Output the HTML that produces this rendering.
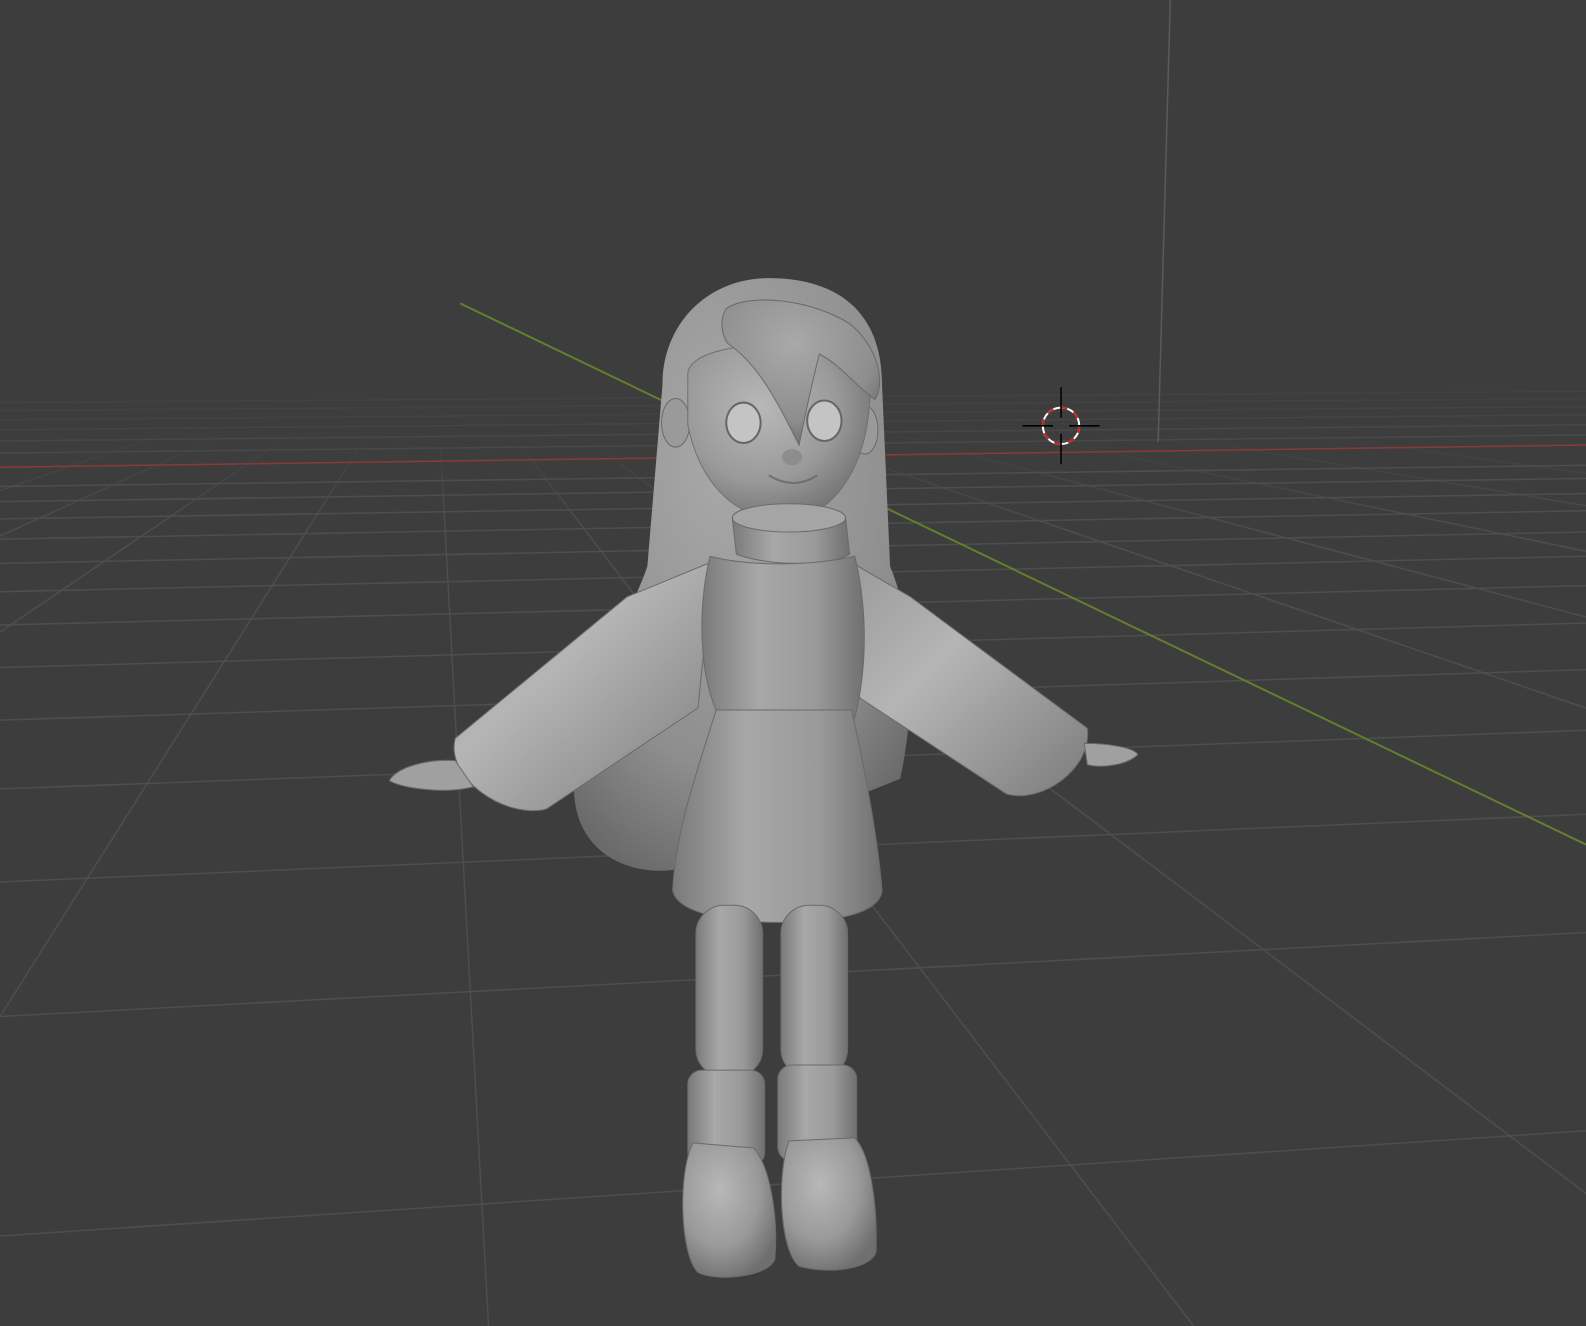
<!DOCTYPE html><html><head><style>html,body{margin:0;padding:0;background:#3d3d3d;overflow:hidden}svg{display:block}</style></head><body>
<svg width="1586" height="1326" viewBox="0 0 1568 1311" preserveAspectRatio="none" xmlns="http://www.w3.org/2000/svg">
<defs>
<radialGradient id="g" cx="40%" cy="35%" r="70%"><stop offset="0" stop-color="#b8b8b8"/><stop offset="0.6" stop-color="#9a9a9a"/><stop offset="1" stop-color="#6f6f6f"/></radialGradient>
<radialGradient id="gh" cx="45%" cy="30%" r="75%"><stop offset="0" stop-color="#a9a9a9"/><stop offset="0.7" stop-color="#8e8e8e"/><stop offset="1" stop-color="#6a6a6a"/></radialGradient>
<linearGradient id="lv" x1="0" x2="1"><stop offset="0" stop-color="#7a7a7a"/><stop offset="0.35" stop-color="#a8a8a8"/><stop offset="0.7" stop-color="#9a9a9a"/><stop offset="1" stop-color="#707070"/></linearGradient>
<linearGradient id="sl" x1="0" y1="0" x2="1" y2="1"><stop offset="0" stop-color="#9a9a9a"/><stop offset="0.4" stop-color="#b5b5b5"/><stop offset="1" stop-color="#7c7c7c"/></linearGradient>
<linearGradient id="fade" x1="0" y1="0" x2="0" y2="1"><stop offset="0" stop-color="#fff" stop-opacity="0"/><stop offset="0.12" stop-color="#fff" stop-opacity="1"/></linearGradient>
<mask id="m"><rect x="0" y="420" width="1568" height="900" fill="url(#fade)"/></mask>
</defs>
<rect width="1568" height="1311" fill="#3d3d3d"/>
<g stroke="#4e4e4e" stroke-width="1.5" fill="none">
<line x1="0" y1="1222" x2="1568" y2="1118"/>
<line x1="0" y1="1005" x2="1568" y2="922"/>
<line x1="0" y1="872" x2="1568" y2="805"/>
<line x1="0" y1="780" x2="1568" y2="722"/>
<line x1="0" y1="712" x2="1568" y2="662"/>
<line x1="0" y1="660" x2="1568" y2="616"/>
<line x1="0" y1="618" x2="1568" y2="579"/>
<line x1="0" y1="585" x2="1568" y2="550"/>
<line x1="0" y1="557" x2="1568" y2="526"/>
<line x1="0" y1="533" x2="1568" y2="505"/>
<line x1="0" y1="513" x2="1568" y2="488"/>
<line x1="0" y1="496" x2="1568" y2="473"/>
<line x1="0" y1="481" x2="1568" y2="460"/>
<line x1="0" y1="448" x2="1568" y2="430" opacity=".7"/>
<line x1="0" y1="436" x2="1568" y2="420" opacity=".6"/>
<line x1="0" y1="425" x2="1568" y2="410" opacity=".5"/>
<line x1="0" y1="415" x2="1568" y2="402" opacity=".4"/>
<line x1="0" y1="406" x2="1568" y2="394" opacity=".35"/>
<line x1="0" y1="398" x2="1568" y2="387" opacity=".3"/>
</g>
<g stroke="#4e4e4e" stroke-width="1.5" fill="none" mask="url(#m)">
<line x1="420" y1="340" x2="0" y2="1005"/>
<line x1="420" y1="340" x2="0" y2="625"/>
<line x1="420" y1="340" x2="0" y2="530"/>
<line x1="420" y1="340" x2="0" y2="485"/>
<line x1="430" y1="340" x2="483" y2="1311"/>
<line x1="430" y1="330" x2="1180" y2="1311"/>
<line x1="430" y1="320" x2="1568" y2="1180"/>
<line x1="430" y1="310" x2="1568" y2="700"/>
<line x1="430" y1="310" x2="1568" y2="610"/>
<line x1="430" y1="310" x2="1568" y2="545"/>
<line x1="430" y1="310" x2="1568" y2="500"/>
<line x1="430" y1="310" x2="1568" y2="468"/>
</g>
<line x1="0" y1="462" x2="1568" y2="440" stroke="#8a3a3a" stroke-width="1.5"/>
<line x1="455" y1="300" x2="1568" y2="835" stroke="#6a8a2a" stroke-width="2" opacity=".85"/>
<line x1="1157" y1="0" x2="1145" y2="437" stroke="#5a5a5a" stroke-width="1.5"/>
<path d="M760 275 C700 275 655 320 655 380 L640 560 C620 620 560 700 568 790 C575 850 630 865 665 860 L890 770 C905 700 905 620 880 560 L872 380 C872 310 830 275 760 275Z" fill="url(#gh)"/>
<ellipse cx="668" cy="418" rx="14" ry="24" fill="#9a9a9a" stroke="#6a6a6a"/>
<ellipse cx="855" cy="425" rx="13" ry="24" fill="#9a9a9a" stroke="#6a6a6a"/>
<path d="M680 370 C680 330 860 330 860 380 C862 450 830 512 775 515 C720 512 690 470 680 420Z" fill="url(#g)" stroke="#707070"/>
<path d="M718 305 C740 290 800 295 840 320 C870 345 875 380 865 395 C850 385 830 360 810 350 C800 390 790 440 790 440 C770 400 750 360 720 340 C712 330 712 315 718 305Z" fill="url(#gh)" stroke="#6a6a6a"/>
<ellipse cx="735" cy="418" rx="17" ry="20" fill="#c4c4c4" stroke="#666" stroke-width="2"/>
<ellipse cx="815" cy="416" rx="17" ry="20" fill="#c4c4c4" stroke="#666" stroke-width="2"/>
<ellipse cx="783" cy="452" rx="10" ry="8" fill="#8d8d8d"/>
<path d="M760 470 Q785 485 808 470" stroke="#707070" stroke-width="2" fill="none"/>
<path d="M705 555 L620 590 L450 730 C440 770 500 810 540 800 L690 700Z" fill="url(#sl)" stroke="#6a6a6a"/>
<path d="M840 555 L900 590 L1075 720 C1080 760 1030 795 995 785 L850 690Z" fill="url(#sl)" stroke="#6a6a6a"/>
<path d="M450 752 C420 750 390 760 385 772 C400 780 440 785 468 778Z" fill="#a0a0a0" stroke="#6a6a6a"/>
<path d="M1072 735 C1090 735 1120 738 1125 746 C1115 756 1090 760 1075 756Z" fill="#a0a0a0" stroke="#6a6a6a"/>
<path d="M724 512 L728 548 C760 560 820 560 840 548 L836 512Z" fill="url(#lv)" stroke="#6a6a6a"/>
<ellipse cx="780" cy="512" rx="56" ry="14" fill="#a5a5a5" stroke="#6a6a6a"/>
<path d="M702 550 C690 600 690 670 712 710 L845 710 C860 650 855 590 845 550 C800 560 740 560 702 550Z" fill="url(#lv)" stroke="#6a6a6a"/>
<path d="M708 702 L842 702 C855 760 868 830 872 880 C870 905 820 912 770 912 C710 912 668 900 665 880 C668 820 690 760 708 702Z" fill="url(#lv)" stroke="#6a6a6a"/>
<rect x="688" y="895" width="66" height="170" rx="28" fill="url(#lv)" stroke="#6a6a6a"/>
<rect x="772" y="895" width="66" height="170" rx="28" fill="url(#lv)" stroke="#6a6a6a"/>
<rect x="680" y="1058" width="76" height="95" rx="14" fill="url(#lv)" stroke="#6a6a6a"/>
<rect x="769" y="1053" width="78" height="95" rx="14" fill="url(#lv)" stroke="#6a6a6a"/>
<path d="M685 1130 C670 1160 672 1240 690 1258 C710 1268 760 1262 766 1245 C770 1200 760 1150 745 1135Z" fill="url(#g)" stroke="#6a6a6a"/>
<path d="M780 1128 C768 1160 770 1235 790 1252 C820 1260 860 1255 866 1238 C868 1190 860 1140 845 1125Z" fill="url(#g)" stroke="#6a6a6a"/>
<g transform="translate(1049 421)">
<circle r="18" fill="none" stroke="#fff" stroke-width="2"/>
<circle r="18" fill="none" stroke="#d02020" stroke-width="2" stroke-dasharray="7 7"/>
<line x1="-38" y1="0" x2="-8" y2="0" stroke="#000" stroke-width="1.5"/>
<line x1="8" y1="0" x2="38" y2="0" stroke="#000" stroke-width="1.5"/>
<line x1="0" y1="-38" x2="0" y2="-8" stroke="#000" stroke-width="1.5"/>
<line x1="0" y1="8" x2="0" y2="38" stroke="#000" stroke-width="1.5"/>
</g>
</svg>
</body></html>
